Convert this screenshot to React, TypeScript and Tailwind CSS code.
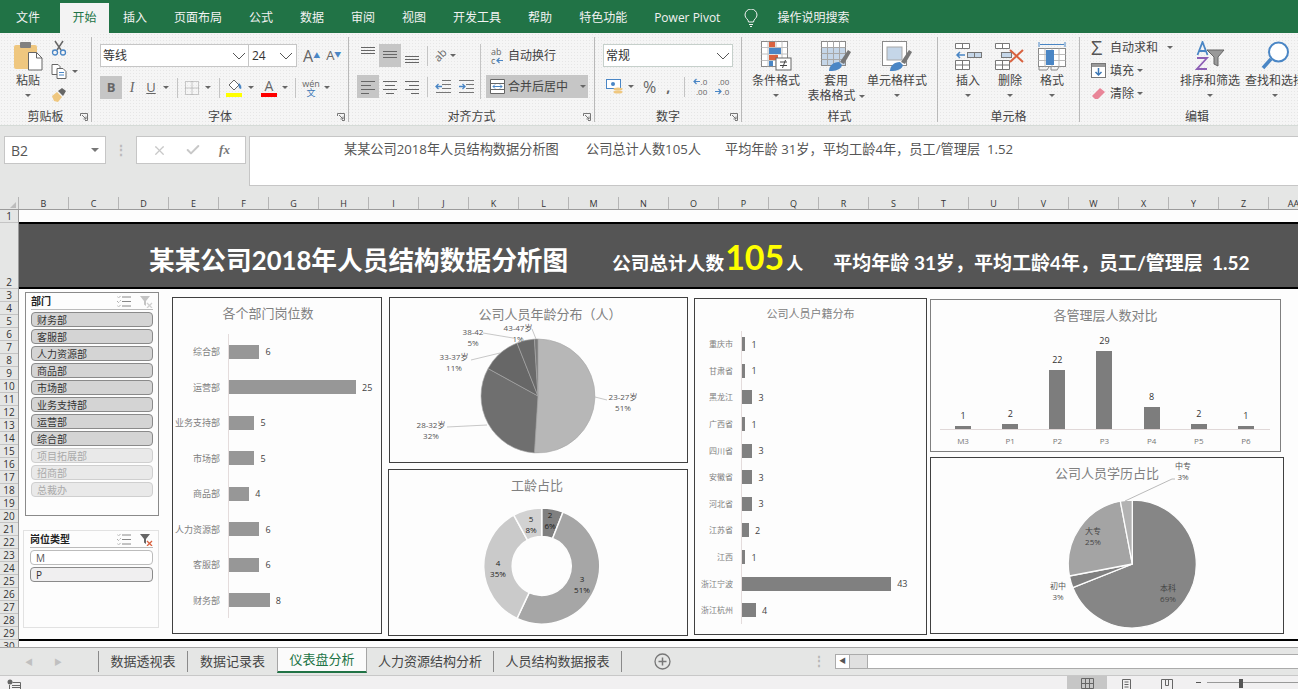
import { Check, X } from "lucide-react"

const TABS = ["插入", "页面布局", "公式", "数据", "审阅", "视图", "开发工具", "帮助", "特色功能", "Power Pivot"]
const COLUMNS = "BCDEFGHIJKLMNOPQRSTUVWXYZ".split("").concat("AA")
const ROWS = Array.from({ length: 28 }, (_, i) => i + 3)

const DEPARTMENTS = [
  { name: "财务部", on: true },
  { name: "客服部", on: true },
  { name: "人力资源部", on: true },
  { name: "商品部", on: true },
  { name: "市场部", on: true },
  { name: "业务支持部", on: true },
  { name: "运营部", on: true },
  { name: "综合部", on: true },
  { name: "项目拓展部", on: false },
  { name: "招商部", on: false },
  { name: "总裁办", on: false },
]

const DEPT_BARS = [
  ["综合部", 6],
  ["运营部", 25],
  ["业务支持部", 5],
  ["市场部", 5],
  ["商品部", 4],
  ["人力资源部", 6],
  ["客服部", 6],
  ["财务部", 8],
] as const

const HOME_BARS = [
  ["重庆市", 1],
  ["甘肃省", 1],
  ["黑龙江", 3],
  ["广西省", 1],
  ["四川省", 3],
  ["安徽省", 3],
  ["河北省", 3],
  ["江苏省", 2],
  ["江西", 1],
  ["浙江宁波", 43],
  ["浙江杭州", 4],
] as const

const LEVELS = [
  ["M3", 1],
  ["P1", 2],
  ["P2", 22],
  ["P3", 29],
  ["P4", 8],
  ["P5", 2],
  ["P6", 1],
] as const

const Caret = ({ className = "" }: { className?: string }) => (
  <span className={`inline-block w-0 h-0 border-x-[3px] border-t-[3px] border-x-transparent border-t-[#666] ${className}`} />
)

const Chevron = () => (
  <svg width="14" height="8" viewBox="0 0 14 8" fill="none" stroke="#555">
    <path d="M1 1l6 6 6-6" />
  </svg>
)

const Launcher = () => (
  <svg className="absolute right-[3px] bottom-[1px]" width="8" height="8" viewBox="0 0 8 8" fill="none" stroke="#777">
    <path d="M.5 3V.5H7.5V7.5H5M2 2l4 4M6 3.500V6H3.500" />
  </svg>
)

const Sep = ({ className = "" }: { className?: string }) => <div className={`w-px h-[20px] bg-[#c4c4c4] ${className}`} />

function Lines({ rows, active = false }: { rows: number[][]; active?: boolean }) {
  return (
    <div className={`w-[22px] h-[23px] flex items-center justify-center ${active ? "bg-[#c6c6c6]" : ""}`}>
      <svg width="22" height="23" viewBox="0 0 22 23" stroke="#666">
        {rows.map(([x1, x2, y]) => (
          <path key={`${x1}-${y}`} d={`M${x1} ${y + 0.5}H${x2}`} />
        ))}
      </svg>
    </div>
  )
}

function Group({ width, label, launcher, children }: { width: string; label: string; launcher?: boolean; children: React.ReactNode }) {
  return (
    <div className={`${width} h-[85px] mt-[4px] flex flex-col border-r border-[#b9b9b9] shrink-0`}>
      <div className="flex-1 flex min-h-0">{children}</div>
      <div className="relative h-[14px] text-center text-[12px] leading-[14px] pt-[2px] text-[#444]">
        {label}
        {launcher && <Launcher />}
      </div>
    </div>
  )
}

function LargeBtn({ width, icon, lines }: { width: string; icon: React.ReactNode; lines: string[] }) {
  return (
    <div className={`${width} shrink-0 flex flex-col items-center pt-[4px] text-[12px] leading-[15px] text-[#444]`}>
      <div className="h-[30px] flex items-center justify-center mb-[2px]">{icon}</div>
      <span className="whitespace-nowrap">{lines[0]}</span>
      {lines[1] ? (
        <span className="whitespace-nowrap">
          {lines[1]} <Caret className="mb-[2px]" />
        </span>
      ) : (
        <Caret className="mt-[6px]" />
      )}
    </div>
  )
}

const PasteIcon = () => (
  <svg width="30" height="30" viewBox="0 0 30 30">
    <rect x="1" y="4" width="23" height="24" rx="2" fill="#efc77f" />
    <rect x="7" y="1" width="11" height="6" rx="1" fill="#808080" />
    <path d="M15.500 11.500h8l5.500 5.500v12h-13.500z" fill="#fff" stroke="#666" />
    <path d="M23.500 11.500v5.500h5.500" fill="none" stroke="#666" />
  </svg>
)

const CutIcon = () => (
  <svg width="16" height="16" viewBox="0 0 16 16" fill="none">
    <path d="M4 1l6 9M12 1l-6 9" stroke="#666" strokeWidth="1.500" />
    <circle cx="4" cy="12.500" r="2.500" stroke="#4a86c5" strokeWidth="1.300" />
    <circle cx="12" cy="12.500" r="2.500" stroke="#4a86c5" strokeWidth="1.300" />
  </svg>
)

const CopyIcon = () => (
  <svg width="16" height="15" viewBox="0 0 16 15" fill="#fff" stroke="#666">
    <path d="M1 .5h6l2 2v8H1z" />
    <path d="M6 4.500h6l3 3v7H6z" />
    <path d="M8 8.500h5M8 11h5" stroke="#4a86c5" />
  </svg>
)

const BrushIcon = () => (
  <svg width="16" height="15" viewBox="0 0 16 15">
    <path d="M1 9l5-4 5 5-4 5-4-1z" fill="#efc77f" />
    <path d="M7 4l4-3 4 3-3 5z" fill="#666" />
  </svg>
)

const CondIcon = () => (
  <svg width="31" height="31" viewBox="0 0 31 31">
    <rect x=".5" y=".5" width="26" height="25" fill="#fff" stroke="#8a8a8a" />
    <path d="M7 .5v25M15 .5v25M21 .5v25M.5 6.500h26M.5 13h26M.5 19.500h26" stroke="#c0c0c0" />
    <rect x="8" y="1" width="6" height="5" fill="#d9623f" />
    <rect x="8" y="7" width="12" height="6" fill="#4a86c5" />
    <rect x="8" y="14" width="9" height="5" fill="#d9623f" />
    <rect x="8" y="20" width="4" height="5" fill="#4a86c5" />
    <rect x="15" y="17" width="15" height="12" fill="#fff" stroke="#666" />
    <path d="M19 21h7M19 24.500h7M24.500 19l-3 8" stroke="#444" fill="none" />
  </svg>
)

const TableIcon = () => (
  <svg width="31" height="31" viewBox="0 0 31 31">
    <rect x=".5" y=".5" width="24" height="24" fill="#fff" stroke="#8a8a8a" />
    <rect x="1" y="6" width="23" height="18" fill="#c5d6e8" />
    <path d="M6.500 .5v24M12.500 .5v24M18.500 .5v24M.5 6.500h24M.5 12.500h24M.5 18.500h24" stroke="#a8a8a8" />
    <path d="M19 21l8-12 3 2-7 12z" fill="#777" />
    <path d="M8 30c0-5 4-9 10-9l3 3c-1 4-5 6-13 6z" fill="#4a86c5" />
  </svg>
)

const CellStyleIcon = () => (
  <svg width="31" height="31" viewBox="0 0 31 31">
    <rect x=".5" y=".5" width="24" height="24" fill="#fff" stroke="#8a8a8a" />
    <rect x="5" y="6" width="15" height="13" fill="#c5d6e8" stroke="#a8a8a8" />
    <path d="M19 21l8-12 3 2-7 12z" fill="#777" />
    <path d="M8 30c0-5 4-9 10-9l3 3c-1 4-5 6-13 6z" fill="#4a86c5" />
  </svg>
)

const InsertIcon = () => (
  <svg width="27" height="28" viewBox="0 0 27 28" fill="#fff" stroke="#777">
    <path d="M.5 1.500h14v5H.5zM7.500 1.500v5M.5 18.500h14v9H.5zM7.500 18.500v9M.5 23h14" />
    <rect x="12.500" y="10.500" width="14" height="5" fill="#c5d6e8" />
    <path d="M19.500 10.500v5" />
    <path d="M10 13H2M5 10l-3 3 3 3" fill="none" stroke="#4a86c5" strokeWidth="1.500" />
  </svg>
)

const DeleteIcon = () => (
  <svg width="30" height="28" viewBox="0 0 30 28" fill="#fff" stroke="#777">
    <path d="M.5 1.500h14v5H.5zM7.500 1.500v5M.5 18.500h14v9H.5zM7.500 18.500v9M.5 23h14" />
    <rect x="6.500" y="10.500" width="10" height="5" fill="#c5d6e8" />
    <path d="M15 8l13 12M28 8L15 20" stroke="#d9623f" strokeWidth="2" />
  </svg>
)

const FormatIcon = () => (
  <svg width="28" height="31" viewBox="0 0 28 31" fill="none" stroke="#8a8a8a">
    <path d="M1 1v5M27 1v5M2 3.500h24" stroke="#4a86c5" />
    <rect x=".5" y="7.500" width="27" height="18" fill="#fff" />
    <path d="M7 7.500v18M14 7.500v18M21 7.500v18M.5 13.500h27M.5 19.500h27" stroke="#bbb" />
    <rect x="8" y="9" width="8" height="15" fill="#4a86c5" stroke="none" />
    <path d="M1 26v3h8l2-3M13 26v3h6l2-3" />
  </svg>
)

const SortIcon = () => (
  <svg width="30" height="30" viewBox="0 0 30 30" fill="none">
    <path d="M2.500 14l5-13 5 13M4.500 10h6" stroke="#4a86c5" strokeWidth="1.800" />
    <path d="M2 17h10L2 28h10" stroke="#8d5fb5" strokeWidth="1.800" />
    <path d="M12 9h17l-6 7v9l-4-2v-7z" fill="#999" stroke="#666" />
  </svg>
)

const FindIcon = () => (
  <svg width="28" height="30" viewBox="0 0 28 30" fill="none">
    <circle cx="17.500" cy="11" r="9.500" fill="#fff" stroke="#4a86c5" strokeWidth="2" />
    <path d="M10 18L2 27" stroke="#4a86c5" strokeWidth="3.500" />
  </svg>
)

const FilterClear = ({ active }: { active: boolean }) => (
  <svg width="13" height="13" viewBox="0 0 13 13">
    <path d="M0 1h10L6 6v5L4 9.500V6z" fill={active ? "#666" : "#c4c4c4"} />
    <path d="M7 8l5 5M12 8l-5 5" stroke={active ? "#d9623f" : "#d0d0d0"} strokeWidth="1.300" />
  </svg>
)

const MultiSelect = () => (
  <svg width="14" height="13" viewBox="0 0 14 13" fill="none" stroke="#888">
    <path d="M5 2h9M5 6.500h9M5 11h9" />
    <path d="M0 1.500l1.500 1.500L4 .5M0 6l1.500 1.500L4 5M0 10.500l1.500 1.500L4 9.500" strokeDasharray="1 1" />
  </svg>
)

const SmallArrow = ({ dir }: { dir: "left" | "right" }) => (
  <svg width="7" height="7" viewBox="0 0 7 7" fill="none" stroke="#4a86c5" strokeWidth="1.200">
    <path d={dir === "left" ? "M7 3.500H1M3.500 1L1 3.500 3.500 6" : "M0 3.500h6M3.500 1L6 3.500 3.500 6"} />
  </svg>
)

function DecimalBtn({ top, bottom, arrow }: { top: string; bottom: string; arrow: "left" | "right" }) {
  return (
    <div className="w-[15px] flex flex-col items-end text-[8px] leading-[10px]">
      <div className="flex items-center gap-[1px]">
        {arrow === "left" && <SmallArrow dir="left" />}
        {top}
      </div>
      <div className="flex items-center gap-[1px]">
        {arrow === "right" && <SmallArrow dir="right" />}
        {bottom}
      </div>
    </div>
  )
}

function Ribbon() {
  return (
    <div className="h-[93px] shrink-0 flex overflow-hidden text-[#444] bg-[#f5f5f5] bg-[radial-gradient(#e6e6e6_0.8px,transparent_0.8px)] bg-[length:3px_3px] border-b border-[#d5dbd7]">
      <Group width="w-[92px]" label="剪贴板" launcher>
        <div className="ml-[12px]">
          <LargeBtn width="w-[32px]" icon={<PasteIcon />} lines={["粘贴"]} />
        </div>
        <div className="ml-[7px] pt-[3px] flex flex-col gap-[8px]">
          <CutIcon />
          <div className="flex items-center gap-[5px]">
            <CopyIcon />
            <Caret />
          </div>
          <BrushIcon />
        </div>
      </Group>

      <Group width="w-[257px]" label="字体" launcher>
        <div className="pl-[8px] pt-[7px] flex flex-col gap-[9px]">
          <div className="flex items-center">
            <div className="w-[149px] h-[23px] flex items-center justify-between px-[2px] bg-white border border-[#c6c6c6] text-[12px] text-[#333]">
              等线
              <Chevron />
            </div>
            <div className="w-[48px] h-[23px] flex items-center justify-between px-[3px] bg-white border border-l-0 border-[#c6c6c6] text-[12px] text-[#333]">
              24
              <Chevron />
            </div>
            <div className="ml-[6px] flex items-center gap-[6px] text-[#666]">
              <span className="text-[16px] leading-none font-medium">
                A<sup className="text-[7px] text-[#4a86c5]">▲</sup>
              </span>
              <span className="text-[13px] leading-none font-medium">
                A<sup className="text-[7px] text-[#4a86c5]">▼</sup>
              </span>
            </div>
          </div>
          <div className="flex items-center h-[23px] text-[#666]">
            <div className="w-[22px] h-[23px] flex items-center justify-center bg-[#c6c6c6] text-[13px] font-bold">B</div>
            <div className="w-[20px] text-center text-[14px] italic [font-family:'Liberation_Serif',serif]">I</div>
            <div className="w-[18px] text-center text-[13px] underline font-medium">U</div>
            <Caret className="ml-[3px]" />
            <Sep className="ml-[8px]" />
            <svg className="ml-[7px]" width="14" height="14" viewBox="0 0 14 14" fill="none" stroke="#999" strokeDasharray="1 1">
              <path d="M.5 .5h13v13H.5zM7 .5v13M.5 7h13" />
            </svg>
            <Caret className="ml-[6px]" />
            <Sep className="ml-[8px]" />
            <svg className="ml-[6px]" width="17" height="19" viewBox="0 0 17 19">
              <path d="M3 7l5-5 5 5-5 5z" fill="#fff" stroke="#666" />
              <path d="M13 5c2 2 3 4 2 6-2 0-3-3-2-6z" fill="#4a86c5" />
              <rect y="15" width="16" height="4" fill="#ffff00" />
            </svg>
            <Caret className="ml-[5px]" />
            <div className="ml-[7px] w-[16px] flex flex-col items-center leading-none">
              <span className="text-[14px] font-medium">A</span>
              <span className="w-[16px] h-[4px] bg-[#ff0000]" />
            </div>
            <Caret className="ml-[5px]" />
            <Sep className="ml-[7px]" />
            <div className="ml-[7px] w-[16px] flex flex-col items-center text-[9px] leading-[9px]">
              <span>wén</span>
              <span className="text-[9px] text-[#3a76b5]">文</span>
            </div>
            <Caret className="ml-[5px]" />
          </div>
        </div>
      </Group>

      <Group width="w-[246px]" label="对齐方式" launcher>
        <div className="w-[131px] pl-[8px] pt-[7px] flex flex-col gap-[8px] shrink-0">
          <div className="flex items-center">
            <Lines rows={[[4, 18, 3], [4, 18, 6], [4, 18, 9]]} />
            <Lines active rows={[[4, 18, 7], [4, 18, 10], [4, 18, 13]]} />
            <Lines rows={[[4, 18, 12], [4, 18, 15], [4, 18, 18]]} />
            <Sep className="ml-[4px]" />
            <span className="ml-[6px] text-[11px] -rotate-45 text-[#666] font-medium">ab</span>
            <Caret className="ml-[3px]" />
          </div>
          <div className="flex items-center">
            <Lines active rows={[[4, 18, 6], [4, 14, 10], [4, 18, 14], [4, 12, 18]]} />
            <Lines rows={[[4, 18, 6], [6, 16, 10], [4, 18, 14], [7, 15, 18]]} />
            <Lines rows={[[4, 18, 6], [8, 18, 10], [4, 18, 14], [10, 18, 18]]} />
            <Sep className="ml-[4px]" />
            <svg className="ml-[7px]" width="40" height="15" viewBox="0 0 40 15" fill="none" stroke="#777">
              <path d="M7 1.500h9M7 5.500h9M7 9.500h9M1 13.500h15M24 1.500h15M31 5.500h8M31 9.500h8M24 13.500h15" />
              <path d="M7 7.500H1M3.500 5L1 7.500 3.500 10M24 7.500h6M27.500 5L30 7.500 27.500 10" stroke="#4a86c5" strokeWidth="1.300" />
            </svg>
          </div>
        </div>
        <div className="w-px h-[55px] mt-[7px] bg-[#c4c4c4]" />
        <div className="pl-[5px] pt-[7px] flex flex-col gap-[8px] text-[12px] text-[#444]">
          <div className="h-[23px] flex items-center pl-[5px]">
            <div className="w-[17px] flex flex-col text-[9px] leading-[9px] text-[#666]">
              <span>ab</span>
              <div className="flex items-center gap-[1px]">
                c
                <SmallArrow dir="left" />
              </div>
            </div>
            自动换行
          </div>
          <div className="w-[102px] h-[23px] flex items-center bg-[#c6c6c6] pl-[4px]">
            <svg width="15" height="15" viewBox="0 0 15 15" fill="#fff" stroke="#666">
              <path d="M.5 .5h14v14H.5zM.5 4.500h14M.5 10.500h14" />
              <path d="M3 7.500h9M5 5.500l-2 2 2 2M10 5.500l2 2-2 2" stroke="#4a86c5" fill="none" />
            </svg>
            <span className="ml-[3px]">合并后居中</span>
            <Caret className="ml-[12px]" />
          </div>
        </div>
      </Group>

      <Group width="w-[147px]" label="数字" launcher>
        <div className="pl-[8px] pt-[7px] flex flex-col gap-[8px]">
          <div className="w-[130px] h-[23px] flex items-center justify-between px-[2px] bg-white border border-[#c6d0cb] text-[12px] text-[#333]">
            常规
            <Chevron />
          </div>
          <div className="flex items-center h-[23px] text-[#666]">
            <svg className="ml-[3px]" width="17" height="17" viewBox="0 0 17 17">
              <rect x=".5" y="1.500" width="14" height="9" fill="#fff" stroke="#4a86c5" />
              <circle cx="7" cy="6" r="2" fill="#4a86c5" />
              <ellipse cx="12" cy="11" rx="4.500" ry="1.500" fill="#efc77f" />
              <ellipse cx="12" cy="14" rx="4.500" ry="1.500" fill="#efc77f" />
            </svg>
            <Caret className="ml-[5px]" />
            <span className="ml-[9px] text-[16px] leading-none">%</span>
            <span className="ml-[10px] text-[14px] leading-none font-bold">,</span>
            <Sep className="ml-[14px]" />
            <div className="ml-[7px]">
              <DecimalBtn top=".0" bottom=".00" arrow="left" />
            </div>
            <div className="ml-[7px]">
              <DecimalBtn top=".00" bottom=".0" arrow="right" />
            </div>
          </div>
        </div>
      </Group>

      <Group width="w-[196px]" label="样式">
        <div className="pl-[10px] flex">
          <LargeBtn width="w-[48px]" icon={<CondIcon />} lines={["条件格式"]} />
          <div className="w-[6px]" />
          <LargeBtn width="w-[60px]" icon={<TableIcon />} lines={["套用", "表格格式"]} />
          <div className="w-px" />
          <LargeBtn width="w-[60px]" icon={<CellStyleIcon />} lines={["单元格样式"]} />
        </div>
      </Group>

      <Group width="w-[142px]" label="单元格">
        <div className="pl-[9px] flex">
          <LargeBtn width="w-[42px]" icon={<InsertIcon />} lines={["插入"]} />
          <LargeBtn width="w-[42px]" icon={<DeleteIcon />} lines={["删除"]} />
          <LargeBtn width="w-[42px]" icon={<FormatIcon />} lines={["格式"]} />
        </div>
      </Group>

      <div className="w-[218px] h-[85px] mt-[4px] flex flex-col shrink-0">
        <div className="flex-1 flex min-h-0">
          <div className="w-[100px] pl-[11px] -mt-[1px] flex flex-col text-[12px] shrink-0">
            <div className="h-[23px] flex items-center">
              <span className="w-[19px] text-[20px] leading-none text-[#555]">Σ</span>
              自动求和
              <Caret className="ml-[9px]" />
            </div>
            <div className="h-[23px] flex items-center">
              <svg className="mr-[4px]" width="15" height="15" viewBox="0 0 15 15">
                <rect x=".5" y=".5" width="14" height="14" fill="#fff" stroke="#777" />
                <rect x="1" y="1" width="13" height="3" fill="#999" />
                <path d="M7.500 5v7M4.500 9l3 3 3-3" fill="none" stroke="#3a76b5" strokeWidth="1.500" />
              </svg>
              填充
              <Caret className="ml-[3px]" />
            </div>
            <div className="h-[23px] flex items-center">
              <svg className="mr-[4px]" width="15" height="13" viewBox="0 0 15 13">
                <path d="M1 9l8-8 5 4-7 7H4z" fill="#e98598" />
              </svg>
              清除
              <Caret className="ml-[3px]" />
            </div>
          </div>
          <LargeBtn width="w-[60px]" icon={<SortIcon />} lines={["排序和筛选"]} />
          <div className="w-[5px] shrink-0" />
          <LargeBtn width="w-[60px]" icon={<FindIcon />} lines={["查找和选择"]} />
        </div>
        <div className="w-[218px] h-[14px] pl-[16px] pt-[2px] text-center text-[12px] leading-[14px] text-[#444]">编辑</div>
      </div>
    </div>
  )
}

function FormulaBar() {
  return (
    <div className="h-[71px] shrink-0 flex items-start pt-[10px] bg-[#e5e6e5]">
      <div className="ml-[4px] w-[102px] h-[28px] flex items-center justify-between pl-[6px] pr-[6px] bg-white border border-[#c6c6c6] text-[14px] text-[#555]">
        B2
        <span className="w-0 h-0 border-x-[4px] border-t-[4px] border-x-transparent border-t-[#777]" />
      </div>
      <div className="w-[30px] h-[28px] flex items-center justify-center text-[#bbb] text-[14px] leading-none font-bold">⋮</div>
      <div className="w-[110px] h-[28px] flex items-center justify-around px-[6px] bg-white border border-[#c6c6c6]">
        <X size={15} strokeWidth={2} className="text-[#c8c8c8]" />
        <Check size={16} strokeWidth={3} className="text-[#c8c8c8]" />
        <span className="text-[13px] italic font-bold text-[#777] [font-family:'Liberation_Serif',serif]">fx</span>
      </div>
      <div className="ml-[3px] flex-1 h-[50px] flex items-start pt-[3px] pl-[94px] bg-white border border-r-0 border-[#c6c6c6] text-[13.200px] leading-[18px] text-[#555] whitespace-pre">
        <span className="w-[242px]">某某公司2018年人员结构数据分析图</span>
        <span className="w-[139px]">公司总计人数105人</span>
        <span>平均年龄 31岁，平均工龄4年，员工/管理层  1.52</span>
      </div>
    </div>
  )
}

function Slicer({ title, active, className, children }: { title: string; active: boolean; className: string; children: React.ReactNode }) {
  return (
    <div className={`flex flex-col bg-[#fdfdfd] border ${className}`}>
      <div className="h-[17px] flex items-center justify-between border-b border-[#bbb] mb-[2px] text-[10px] font-bold text-[#222]">
        {title}
        <div className="flex items-center gap-[9px]">
          <MultiSelect />
          <FilterClear active={active} />
        </div>
      </div>
      {children}
    </div>
  )
}

function SlicerItem({ name, tone }: { name: string; tone: "on" | "off" | "plain" | "soft" }) {
  const styles = {
    on: "bg-[#d4d4d4] border-[#8a8a8a] text-[#333]",
    off: "bg-[#e9e9e9] border-[#cfcfcf] text-[#aaa]",
    plain: "bg-white border-[#bcbcbc] text-[#555]",
    soft: "bg-[#f0eff0] border-[#8a8a8a] text-[#333]",
  }
  return (
    <div className={`h-[15px] mb-[2px] pl-[5px] flex items-center rounded-[4px] border text-[10px] leading-none ${styles[tone]}`}>
      {name}
    </div>
  )
}

function HBarChart({ data, unit, rowHeight, color, title, titleSize, labelWidth, labelSize, className }: {
  data: readonly (readonly [string, number])[]
  unit: number
  rowHeight: string
  color: string
  title: string
  titleSize: string
  labelWidth: string
  labelSize: string
  className: string
}) {
  return (
    <div className={`bg-[#fdfdfd] border border-[#404040] flex flex-col shrink-0 ${className}`}>
      <div className={`text-center text-[#808080] ${titleSize}`}>{title}</div>
      <div className="flex">
        <div className={`${labelWidth} shrink-0`}>
          {data.map(([name]) => (
            <div key={name} className={`${rowHeight} pr-[8px] flex items-center justify-end ${labelSize} leading-none text-[#808080] whitespace-nowrap`}>
              {name}
            </div>
          ))}
        </div>
        <div className="border-l border-[#e4dcdc]">
          {data.map(([name, value]) => (
            <div key={name} className={`${rowHeight} flex items-center`}>
              <div className={`h-[14px] ${color}`} style={{ width: value * unit }} />
              <span className="ml-[6px] text-[9px] leading-none text-[#444]">{value}</span>
            </div>
          ))}
        </div>
      </div>
    </div>
  )
}

// pie slices are given in percent, clockwise from 12 o'clock
function slicePath(cx: number, cy: number, r: number, inner: number, from: number, to: number) {
  const pt = (rad: number, pct: number) => {
    const a = (pct / 100) * 2 * Math.PI
    return `${(cx + rad * Math.sin(a)).toFixed(2)} ${(cy - rad * Math.cos(a)).toFixed(2)}`
  }
  const large = to - from > 50 ? 1 : 0
  if (!inner) return `M${cx} ${cy}L${pt(r, from)}A${r} ${r} 0 ${large} 1 ${pt(r, to)}Z`
  return `M${pt(r, from)}A${r} ${r} 0 ${large} 1 ${pt(r, to)}L${pt(inner, to)}A${inner} ${inner} 0 ${large} 0 ${pt(inner, from)}Z`
}

function Pie({ cx, cy, r, inner = 0, slices, stroke, strokeWidth }: {
  cx: number
  cy: number
  r: number
  inner?: number
  slices: [number, string][]
  stroke: string
  strokeWidth: number
}) {
  let at = 0
  return (
    <>
      {slices.map(([pct, fill]) => {
        const d = slicePath(cx, cy, r, inner, at, at + pct)
        at += pct
        return <path key={`${pct}-${fill}`} d={d} fill={fill} stroke={stroke} strokeWidth={strokeWidth} />
      })}
    </>
  )
}

function Label({ x, y, lines, fill = "#555" }: { x: number; y: number; lines: string[]; fill?: string }) {
  return (
    <text textAnchor="middle" fontSize="8" fill={fill}>
      {lines.map((line, i) => (
        <tspan key={line} x={x} y={y + i * 11 + 3}>
          {line}
        </tspan>
      ))}
    </text>
  )
}

function ChartSvg({ x, y, w, h, title, tx, ty, className, children }: {
  x: number
  y: number
  w: number
  h: number
  title: string
  tx: number
  ty: number
  className: string
  children: React.ReactNode
}) {
  return (
    <div className={`bg-[#fdfdfd] border border-[#404040] ${className}`}>
      <svg className="block" width={w - 2} height={h - 2} viewBox={`${x + 1} ${y + 1} ${w - 2} ${h - 2}`}>
        <text x={tx} y={ty + 5} textAnchor="middle" fontSize="13" fill="#808080">
          {title}
        </text>
        {children}
      </svg>
    </div>
  )
}

function Dashboard() {
  return (
    <div className="h-[350px] shrink-0 flex bg-[#fdfdfd]">
      <div className="ml-[4px] w-[136px] shrink-0 flex flex-col items-end">
        <Slicer title="部门" active={false} className="mt-[3px] w-[134px] h-[224px] px-[5px] border-[#8a8a8a]">
          {DEPARTMENTS.map((d) => (
            <SlicerItem key={d.name} name={d.name} tone={d.on ? "on" : "off"} />
          ))}
        </Slicer>
        <Slicer title="岗位类型" active className="mt-[14px] w-[136px] h-[98px] pl-[6px] pr-[5px] border-[#e2e2e2]">
          <SlicerItem name="M" tone="plain" />
          <SlicerItem name="P" tone="soft" />
        </Slicer>
      </div>

      <HBarChart
        className="ml-[13px] mt-[8px] w-[210px] h-[337px]"
        data={DEPT_BARS}
        unit={5.08}
        rowHeight="h-[35.5px]"
        color="bg-[#979797]"
        title="各个部门岗位数"
        titleSize="text-[13px] leading-[19px] pt-[6px] pb-[11px] pr-[18px]"
        labelWidth="w-[55px]"
        labelSize="text-[9px]"
      />

      <div className="ml-[6px] w-[300px] shrink-0 flex flex-col items-end">
        <ChartSvg className="mt-[8px] w-[299px] h-[166px]" x={389} y={297} w={299} h={166} title="公司人员年龄分布（人）" tx={550} ty={314}>
          <Pie
            cx={538}
            cy={396}
            r={57}
            stroke="#a8a8a8"
            strokeWidth={0.6}
            slices={[[51, "#b7b7b7"], [32, "#6f6f6f"], [11, "#676767"], [5, "#6a6a6a"], [1, "#7a7a7a"]]}
          />
          <path d="M595 397L607 400M447 427L487 425M471 360L500 353M483 333L513 338M532 329L536 339" stroke="#b0b0b0" fill="none" strokeWidth="0.7" />
          <Label x={623} y={397} lines={["23-27岁", "51%"]} />
          <Label x={431} y={425} lines={["28-32岁", "32%"]} />
          <Label x={454} y={357} lines={["33-37岁", "11%"]} />
          <Label x={473} y={332} lines={["38-42", "5%"]} />
          <Label x={518} y={328} lines={["43-47岁", "1%"]} />
        </ChartSvg>
        <ChartSvg className="mt-[6px] w-[300px] h-[167px]" x={388} y={469} w={300} h={167} title="工龄占比" tx={537} ty={485}>
          <Pie
            cx={541.700}
            cy={566}
            r={58}
            inner={29.500}
            stroke="#fdfdfd"
            strokeWidth={1.500}
            slices={[[6, "#808080"], [51, "#a6a6a6"], [35, "#cacaca"], [8, "#d2d2d2"]]}
          />
          <Label x={550} y={515} lines={["2", "6%"]} fill="#222" />
          <Label x={582} y={579} lines={["3", "51%"]} fill="#222" />
          <Label x={498} y={563} lines={["4", "35%"]} fill="#222" />
          <Label x={531} y={519} lines={["5", "8%"]} fill="#222" />
        </ChartSvg>
      </div>

      <HBarChart
        className="ml-[6px] mt-[9px] w-[233px] h-[337px]"
        data={HOME_BARS}
        unit={3.47}
        rowHeight="h-[26.6px]"
        color="bg-[#808080]"
        title="公司人员户籍分布"
        titleSize="text-[11px] leading-[15px] pt-[7px] pb-[10px]"
        labelWidth="w-[46px]"
        labelSize="text-[8px]"
      />

      <div className="ml-[3px] shrink-0 flex flex-col">
        <div className="mt-[10px] w-[351px] h-[153px] bg-[#fdfdfd] border border-[#7f7f7f] flex flex-col">
          <div className="text-center text-[13px] leading-[19px] pt-[6px] text-[#808080]">各管理层人数对比</div>
          <div className="ml-[8.500px] w-[330px] h-[105px] flex items-end border-b border-[#e0d8d8]">
            {LEVELS.map(([name, value]) => (
              <div key={name} className="flex-1 flex flex-col items-center">
                <span className="mb-[4px] text-[9px] leading-[12px] text-[#333]">{value}</span>
                <div className="w-[16px] bg-[#7d7d7d]" style={{ height: value * 2.69 }} />
              </div>
            ))}
          </div>
          <div className="ml-[8.500px] w-[330px] mt-[5px] flex">
            {LEVELS.map(([name]) => (
              <span key={name} className="flex-1 text-center text-[8px] leading-[12px] text-[#777]">
                {name}
              </span>
            ))}
          </div>
        </div>
        <ChartSvg className="mt-[5px] w-[354px] h-[177px]" x={930} y={457} w={354} h={177} title="公司人员学历占比" tx={1107} ty={473}>
          <Pie
            cx={1132.300}
            cy={564}
            r={64}
            stroke="#fdfdfd"
            strokeWidth={1.300}
            slices={[[69, "#868686"], [3, "#808080"], [25, "#a4a4a4"], [3, "#b2b2b2"]]}
          />
          <path d="M1175 479H1172L1125 501" stroke="#a8a8a8" fill="none" strokeWidth="0.8" />
          <Label x={1168} y={588} lines={["本科", "69%"]} fill="#444" />
          <Label x={1058} y={586} lines={["初中", "3%"]} />
          <Label x={1093} y={531} lines={["大专", "25%"]} fill="#444" />
          <Label x={1183} y={466} lines={["中专", "3%"]} />
        </ChartSvg>
      </div>
    </div>
  )
}

function SheetTabs() {
  return (
    <div className="h-[28px] shrink-0 flex items-start bg-[#e5e6e5] border-t border-[#a5a5a5] text-[13px] text-[#444]">
      <div className="w-[99px] h-[21px] mt-[3px] flex items-center shrink-0 border-r border-[#8a8a8a] text-[#c0c0c0] text-[8px]">
        <span className="ml-[25px]">◀</span>
        <span className="ml-[21px]">▶</span>
      </div>
      <div className="w-[89px] h-[21px] mt-[3px] flex items-center justify-center shrink-0 border-r border-[#8a8a8a]">数据透视表</div>
      <div className="w-[89px] h-[21px] mt-[3px] flex items-center justify-center shrink-0">数据记录表</div>
      <div className="w-[90px] h-[25px] flex items-center justify-center shrink-0 bg-[#fbfbfb] border-x border-[#a5a5a5] border-b-[2px] border-b-[#217346] text-[#217346]">
        仪表盘分析
      </div>
      <div className="w-[127px] h-[21px] mt-[3px] flex items-center justify-center shrink-0 border-r border-[#8a8a8a]">人力资源结构分析</div>
      <div className="w-[128px] h-[21px] mt-[3px] flex items-center justify-center shrink-0 border-r border-[#8a8a8a]">人员结构数据报表</div>
      <svg className="ml-[32px] mt-[5px] shrink-0" width="17" height="17" viewBox="0 0 17 17" fill="none" stroke="#777">
        <circle cx="8.500" cy="8.500" r="7.500" strokeWidth="1.300" />
        <path d="M8.500 4.500v8M4.500 8.500h8" strokeWidth="1.500" />
      </svg>
      <span className="ml-[142px] mt-[5px] text-[#b5b5b5] text-[12px] leading-[16px] font-bold">⋮</span>
      <div className="ml-[10px] mt-[6px] flex-1 h-[15px] flex border-y border-l border-[#ababab] bg-white">
        <div className="w-[14px] flex items-center justify-center border-r border-[#ababab] text-[7px] text-[#555]">◀</div>
        <div className="w-[18px] bg-[#e0e0e0] border-r border-[#ababab]" />
      </div>
    </div>
  )
}

function StatusBar() {
  return (
    <div className="h-[14px] shrink-0 flex items-start overflow-hidden bg-[#f1f0f1] border-t border-[#c8c8c8]">
      <svg className="ml-[7px] mt-[3px]" width="14" height="11" viewBox="0 0 14 11">
        <circle cx="3" cy="3" r="2.500" fill="#666" />
        <path d="M5.500 3.500h8v7h-11V6M5 6.500h8M5 8.500h8" stroke="#666" fill="none" />
      </svg>
      <div className="ml-[1046px] w-[40px] h-[14px] bg-[#c6c6c6] flex items-center justify-center text-[#666] text-[13px] leading-none">
        <svg width="13" height="11" viewBox="0 0 13 11" fill="none" stroke="#666">
          <path d="M.5 .5h12v10H.5zM4.500 .5v10M8.500 .5v10M.5 5.500h12" />
        </svg>
      </div>
      <svg className="ml-[14px] mt-[3px]" width="11" height="11" viewBox="0 0 11 11" fill="none" stroke="#666">
        <path d="M1.500 .5h8v10h-8zM3.500 3h4M3.500 5.500h4M3.500 8h4" />
      </svg>
      <svg className="ml-[29px] mt-[3px]" width="12" height="11" viewBox="0 0 12 11" fill="none" stroke="#666">
        <path d="M.5 .5h11v10h-11zM4.500 .5v6h3v-6" />
      </svg>
      <span className="ml-[23px] mt-[6px] w-[5px] h-px bg-[#555]" />
      <div className="relative ml-[6px] flex-1 h-[12px]">
        <div className="mt-[6px] h-px bg-[#999]" />
        <div className="absolute left-[32px] top-[3px] w-[4px] h-[9px] bg-[#555]" />
      </div>
    </div>
  )
}

export default function App() {
  return (
    <div className="w-[1298px] h-[689px] overflow-hidden flex flex-col bg-white [font-family:'Open_Sans','Noto_Sans_CJK_SC',sans-serif]">
      <div className="h-[33px] shrink-0 flex items-end bg-[#217346] text-[12px] text-[#f2f2f2]">
        <div className="h-[30px] ml-[16px] w-[24px] flex items-center whitespace-nowrap">文件</div>
        <div className="h-[30px] ml-[20px] w-[49px] flex items-center justify-center bg-[#f3f3f3] text-[#217346]">开始</div>
        <div className="ml-[14px] flex items-center gap-[27px] h-[30px]">
          {TABS.map((tab) => (
            <span key={tab} className="whitespace-nowrap">
              {tab}
            </span>
          ))}
          <div className="flex items-center gap-[19px] -ml-[3px]">
            <svg width="14" height="18" viewBox="0 0 14 18" fill="none" stroke="#f2f2f2">
              <path d="M4.500 13c0-3-3.500-3.500-3.500-7a6 6 0 0 1 12 0c0 3.500-3.500 4-3.500 7zM5 15.500h4M6 17.500h2" />
            </svg>
            <span className="whitespace-nowrap">操作说明搜索</span>
          </div>
        </div>
      </div>

      <Ribbon />
      <FormulaBar />

      <div className="h-[13px] shrink-0 flex bg-[#e5e6e5] border-b border-[#9b9b9b]">
        <div className="w-[19px] shrink-0 relative border-r border-[#b5b5b5]">
          <span className="absolute right-[2px] bottom-[1px] w-0 h-0 border-l-[6px] border-t-[6px] border-l-transparent border-t-transparent border-b-0 border-r-[6px] border-r-[#bdbdbd]" />
        </div>
        {COLUMNS.map((col) => (
          <div key={col} className="w-[50px] shrink-0 flex items-center justify-center border-r border-[#b5b5b5] text-[9px] leading-none text-[#333]">
            {col}
          </div>
        ))}
      </div>

      <div className="flex-1 min-h-0 flex overflow-hidden">
        <div className="w-[19px] shrink-0 bg-[#e5e6e5] border-r border-[#9b9b9b] text-[10px] leading-none text-[#333]">
          <div className="h-[13px] flex items-center justify-center border-b border-[#c4c4c4]">1</div>
          <div className="h-[66px] pb-[1px] flex items-end justify-center border-b border-[#c4c4c4]">2</div>
          {ROWS.map((row) => (
            <div key={row} className="h-[13px] shrink-0 flex items-center justify-center border-b border-[#c4c4c4]">
              {row}
            </div>
          ))}
        </div>
        <div className="flex-1 min-w-0 flex flex-col bg-[#fdfdfd]">
          <div className="h-[12px] shrink-0" />
          <div className="h-[67px] shrink-0 flex items-baseline pl-[130px] pt-[16px] border-y-2 border-black text-white font-medium bg-[#555] bg-[radial-gradient(#686868_0.7px,transparent_0.7px)] bg-[length:4px_4px] whitespace-pre [font-family:'Lato','Noto_Sans_CJK_SC',sans-serif]">
            <span className="w-[463px] text-[25.700px] leading-[34px] font-bold shrink-0">某某公司2018年人员结构数据分析图</span>
            <span className="text-[18.700px] font-bold">公司总计人数</span>
            <span className="ml-[1px] text-[34px] leading-[34px] font-bold text-[#ffff00]">105</span>
            <span className="ml-[2px] w-[47px] text-[17px] font-bold">人</span>
            <span className="text-[19px] font-bold">平均年龄 31岁，平均工龄4年，员工/管理层  1.52</span>
          </div>
          <Dashboard />
          <div className="h-[2px] shrink-0 bg-black" />
        </div>
      </div>

      <SheetTabs />
      <StatusBar />
    </div>
  )
}
